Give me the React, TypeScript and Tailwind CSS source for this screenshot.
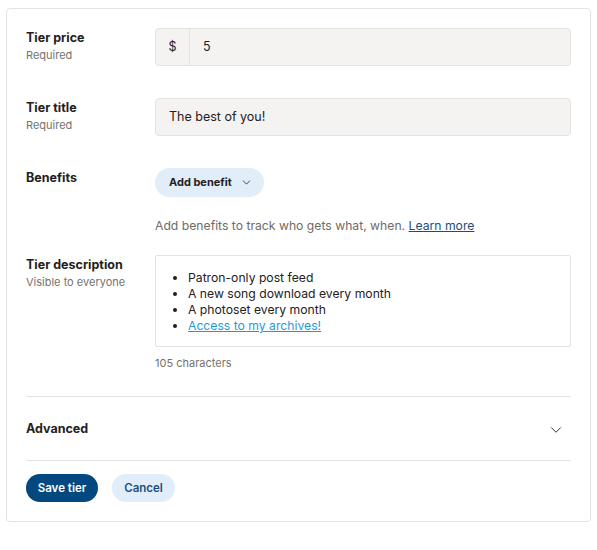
import { ChevronDown } from "lucide-react";

const font = { fontFamily: "Inter, 'Noto Sans', sans-serif" };

function Label({ title, hint }: { title: string; hint?: string }) {
  return (
    <div className="w-[129px] shrink-0 pt-[1px]">
      <div className="text-[12.5px] leading-[18px] font-bold text-[#24211c]">{title}</div>
      {hint && <div className="text-[11px] leading-4 text-[#76726c]">{hint}</div>}
    </div>
  );
}

export default function App() {
  return (
    <div className="min-h-[550px] bg-white pl-[6px] pt-[8px]" style={font}>
      <div className="w-[585px] rounded-[4px] border border-[#e5e3dd] px-[19px] pt-[19px] pb-[19px]">
        {/* price */}
        <div className="flex">
          <Label title="Tier price" hint="Required" />
          <div className="flex h-[38px] flex-1 items-stretch rounded-[4px] border border-[#e5e3dd] bg-[#f4f3f1] text-[12.5px] text-[#24211c]">
            <div className="flex w-[34px] items-center justify-center border-r border-[#e5e3dd]">$</div>
            <div className="flex items-center pl-[13px]">5</div>
          </div>
        </div>

        {/* title */}
        <div className="mt-[32px] flex">
          <Label title="Tier title" hint="Required" />
          <div className="flex h-[38px] flex-1 items-center rounded-[4px] border border-[#e5e3dd] bg-[#f4f3f1] pl-[13px] text-[12.5px] text-[#24211c]">
            The best of you!
          </div>
        </div>

        {/* benefits */}
        <div className="mt-[32px] flex">
          <Label title="Benefits" />
          <div className="flex-1">
            <button className="flex h-[29px] items-center gap-[8px] rounded-full bg-[#e1eefa] pl-[14px] pr-[11px] text-[11px] font-bold text-[#24211c]">
              Add benefit
              <ChevronDown size={13} strokeWidth={1.5} />
            </button>
            <p className="mt-[19px] text-[12.2px] leading-5 text-[#6f6b66]">
              Add benefits to track who gets what, when.{" "}
              <a className="text-[#1c4d7e] underline">Learn more</a>
            </p>
          </div>
        </div>

        {/* description */}
        <div className="mt-[19px] flex">
          <Label title="Tier description" hint="Visible to everyone" />
          <div className="flex-1">
            <div className="rounded-[2px] border border-[#e5e3dd] pt-[14px] pb-[12px] pl-[14px] text-[12.2px] leading-4 text-[#24211c]">
              <ul className="list-disc pl-[18px]">
                <li>Patron-only post feed</li>
                <li>A new song download every month</li>
                <li>A photoset every month</li>
                <li>
                  <a className="text-[#1f9ad6] underline">Access to my archives!</a>
                </li>
              </ul>
            </div>
            <div className="mt-[8px] text-[11px] leading-4 text-[#76726c]">105 characters</div>
          </div>
        </div>

        {/* advanced */}
        <div className="mt-[25px] border-y border-[#e5e3dd]">
          <div className="flex h-[63px] items-center justify-between pt-[2px]">
            <span className="text-[12.5px] font-bold text-[#24211c]">Advanced</span>
            <ChevronDown size={18} strokeWidth={1.25} className="mr-[6px] text-[#24211c]" />
          </div>
        </div>

        <div className="mt-[13px] flex gap-[14px]">
          <button className="h-[28px] w-[72px] rounded-full bg-[#03497f] pt-[1px] text-[11.5px] font-semibold text-white">
            Save tier
          </button>
          <button className="h-[28px] w-[63px] rounded-full bg-[#e1eefa] pt-[1px] text-[11.5px] font-semibold text-[#1c4d7e]">
            Cancel
          </button>
        </div>
      </div>
    </div>
  );
}
